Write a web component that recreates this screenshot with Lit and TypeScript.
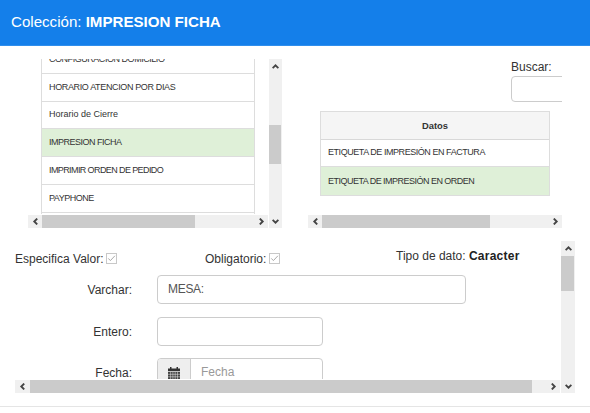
import { LitElement, html, css } from "lit";
import { customElement, property } from "lit/decorators.js";
import { classMap } from "lit/directives/class-map.js";
import { styleMap } from "lit/directives/style-map.js";

interface Row {
  text: string;
  tracking: number;
  selected?: boolean;
}

const COLLECTIONS: Row[] = [
  { text: "CONFIGURACION DOMICILIO", tracking: -0.46 },
  { text: "HORARIO ATENCION POR DIAS", tracking: -0.36 },
  { text: "Horario de Cierre", tracking: 0 },
  { text: "IMPRESION FICHA", tracking: -0.5, selected: true },
  { text: "IMPRIMIR ORDEN DE PEDIDO", tracking: -0.6 },
  { text: "PAYPHONE", tracking: -0.5 },
  { text: "", tracking: 0 },
];

const DATA: Row[] = [
  { text: "ETIQUETA DE IMPRESIÓN EN FACTURA", tracking: -0.45 },
  { text: "ETIQUETA DE IMPRESIÓN EN ORDEN", tracking: -0.52, selected: true },
];

@customElement("scroll-bar")
export class ScrollBar extends LitElement {
  @property({ type: Boolean, reflect: true }) vertical = false;
  @property({ type: Number }) start = 0;
  @property({ type: Number }) size = 50;

  static styles = css`
    :host { display: flex; background: #f0f0f0; overflow: hidden; min-width: 0; min-height: 0; }
    :host([vertical]) { flex-direction: column; }
    .arrow { flex: 0 0 14px; display: flex; align-items: center; justify-content: center; }
    svg { width: 7px; height: 7px; display: block; }
    path { fill: none; stroke: #444; stroke-width: 1.9; }
    .track { flex: 1; display: flex; min-width: 0; min-height: 0; }
    :host([vertical]) .track { flex-direction: column; }
    .thumb { background: #cbcbcb; margin-bottom: 0.4px; }
    :host([vertical]) .thumb { margin: 0 0.6px 0 0; }
  `;

  render() {
    const back = this.vertical ? "M.6 5.2 3.5 2.3 6.4 5.2" : "M5.2.6 2.3 3.5 5.2 6.4";
    const next = this.vertical ? "M.6 1.8 3.5 4.7 6.4 1.8" : "M1.8.6 4.7 3.5 1.8 6.4";
    const thumb = this.vertical
      ? { height: `${this.size}px`, marginTop: `${this.start}px` }
      : { width: `${this.size}px`, marginLeft: `${this.start}px` };
    return html`
      <div class="arrow"><svg viewBox="0 0 7 7"><path d=${back} /></svg></div>
      <div class="track"><div class="thumb" style=${styleMap(thumb)}></div></div>
      <div class="arrow"><svg viewBox="0 0 7 7"><path d=${next} /></svg></div>
    `;
  }
}

@customElement("data-table")
export class DataTable extends LitElement {
  @property({ attribute: false }) rows: Row[] = [];
  @property() heading = "";

  static styles = css`
    :host { display: block; border: 1px solid #ddd; box-sizing: border-box; font-size: 9px; color: #333; }
    .head, .row { box-sizing: border-box; height: 27.75px; display: flex; align-items: center; white-space: nowrap; }
    .head { height: 27.5px; justify-content: center; background: #f5f5f5; font-weight: bold; font-size: 9.4px; border-bottom: 1px solid #d8d8d8; }
    .row { padding-left: 7px; border-bottom: 1px solid #ddd; }
    .row:last-child { border-bottom: 0; }
    .selected { background: #dff0d8; }
  `;

  render() {
    return html`
      ${this.heading ? html`<div class="head">${this.heading}</div>` : ""}
      ${this.rows.map(
        (r) => html`<div class=${classMap({ row: true, selected: !!r.selected })}>
          <span style=${styleMap({ letterSpacing: `${r.tracking}px` })}>${r.text}</span>
        </div>`,
      )}
    `;
  }
}

@customElement("app-root")
export class AppRoot extends LitElement {
  static styles = css`
    :host { display: flex; flex-direction: column; width: 590px; height: 413px; overflow: hidden; background: #fff;
      font-family: "Liberation Sans", Arial, sans-serif; font-size: 12px; line-height: 17px; color: #333; }
    * { box-sizing: border-box; }
    header { flex: none; height: 46px; padding: 0 0 2px 11px; display: flex; align-items: center; background: #147fea;
      border-bottom: 1px solid #308eec; color: #fff; font-size: 15.1px; white-space: pre; }
    .lists { flex: none; display: flex; gap: 26px; padding: 13px 28px 0; height: 182px; }
    .pane { width: 254px; height: 169px; display: grid; grid-template: 155px 13px / 240px 13px; gap: 1px; }
    .pane.wide { grid-template-columns: 254px; }
    .view { overflow: hidden; min-width: 0; }
    .tall { grid-row: 1 / 3; grid-column: 2; }
    .collections { margin: -14px 0 0 13px; width: 214px; }
    .search { margin-left: 203px; display: flex; flex-direction: column; }
    .search .field { width: 110px; height: 26px; }
    .data { margin: 9px 0 0 12px; width: 230px; }
    .field { border: 1px solid #ccc; border-radius: 4px; background: #fff; color: #555; display: flex; align-items: center; padding: 0 10px; }
    .editor { flex: none; margin: 13px 0 0 15px; width: 560px; height: 152px; display: grid;
      grid-template: 138px 13px / 545px 14px; gap: 1px; }
    .flags { display: flex; height: 34px; }
    .flag { display: flex; align-items: center; gap: 3px; }
    .first { width: 190px; padding-top: 3px; }
    .second { width: 191px; padding-top: 3px; }
    .type { padding-bottom: 4px; gap: 0; white-space: pre; }
    .type b { letter-spacing: 0.25px; color: #222; }
    .check { width: 11px; height: 11px; display: block; margin-bottom: 3px; }
    .line { display: flex; align-items: center; height: 29px; margin-bottom: 12.7px; }
    .label { width: 117px; margin-right: 25px; text-align: right; padding-top: 2px; }
    .line .field { height: 29px; width: 166px; }
    .line .long { width: 309px; letter-spacing: -0.3px; }
    .group .field { padding: 0; overflow: hidden; align-items: stretch; }
    .addon { width: 33px; background: #eee; border-right: 1px solid #ccc; display: flex; align-items: center; justify-content: center; padding-top: 2px; }
    .addon svg { width: 12px; height: 13px; display: block; }
    .hint { color: #999; padding: 5px 0 0 10px; }
    .rule { flex: none; height: 1px; margin-top: 13px; background: #e5e5e5; }
  `;

  private check() {
    return html`<svg class="check" viewBox="0 0 11 11">
      <rect x=".5" y=".5" width="10" height="10" fill="#fff" stroke="#c8c8c8" />
      <path d="M2.3 5.4 4.4 7.6 8.9 2.8" fill="none" stroke="#aaa" />
    </svg>`;
  }

  render() {
    return html`
      <header><span>Colección: <b>IMPRESION FICHA</b></span></header>
      <section class="lists">
        <div class="pane">
          <div class="view"><data-table class="collections" .rows=${COLLECTIONS}></data-table></div>
          <scroll-bar class="tall" vertical .start=${51.5} .size=${39}></scroll-bar>
          <scroll-bar .start=${0} .size=${153}></scroll-bar>
        </div>
        <div class="pane wide">
          <div class="view">
            <div class="search"><span>Buscar:</span><div class="field"></div></div>
            <data-table class="data" heading="Datos" .rows=${DATA}></data-table>
          </div>
          <scroll-bar .start=${0} .size=${168}></scroll-bar>
        </div>
      </section>
      <section class="editor">
        <div class="view">
          <div class="flags">
            <div class="flag first">Especifica Valor:${this.check()}</div>
            <div class="flag second">Obligatorio:${this.check()}</div>
            <div class="flag type">Tipo de dato: <b>Caracter</b></div>
          </div>
          <div class="line"><span class="label">Varchar:</span><div class="field long">MESA:</div></div>
          <div class="line"><span class="label">Entero:</span><div class="field"></div></div>
          <div class="line group">
            <span class="label">Fecha:</span>
            <div class="field">
              <div class="addon">
                <svg viewBox="0 0 12 13">
                  <path fill="#333" d="M0 1.5h2V0h1.5v1.5h5V0H10v1.5h2V4H0z" />
                  <path fill="#444" d="M0 4.7h12V13H0z" />
                  <path stroke="#eee" stroke-width=".5" d="M0 7.3h12M0 9.8h12M2.6 5v8M4.9 5v8M7.2 5v8M9.5 5v8" />
                </svg>
              </div>
              <span class="hint">Fecha</span>
            </div>
          </div>
        </div>
        <scroll-bar class="tall" vertical .start=${0.5} .size=${35.5}></scroll-bar>
        <scroll-bar .start=${0.5} .size=${502}></scroll-bar>
      </section>
      <div class="rule"></div>
    `;
  }
}
